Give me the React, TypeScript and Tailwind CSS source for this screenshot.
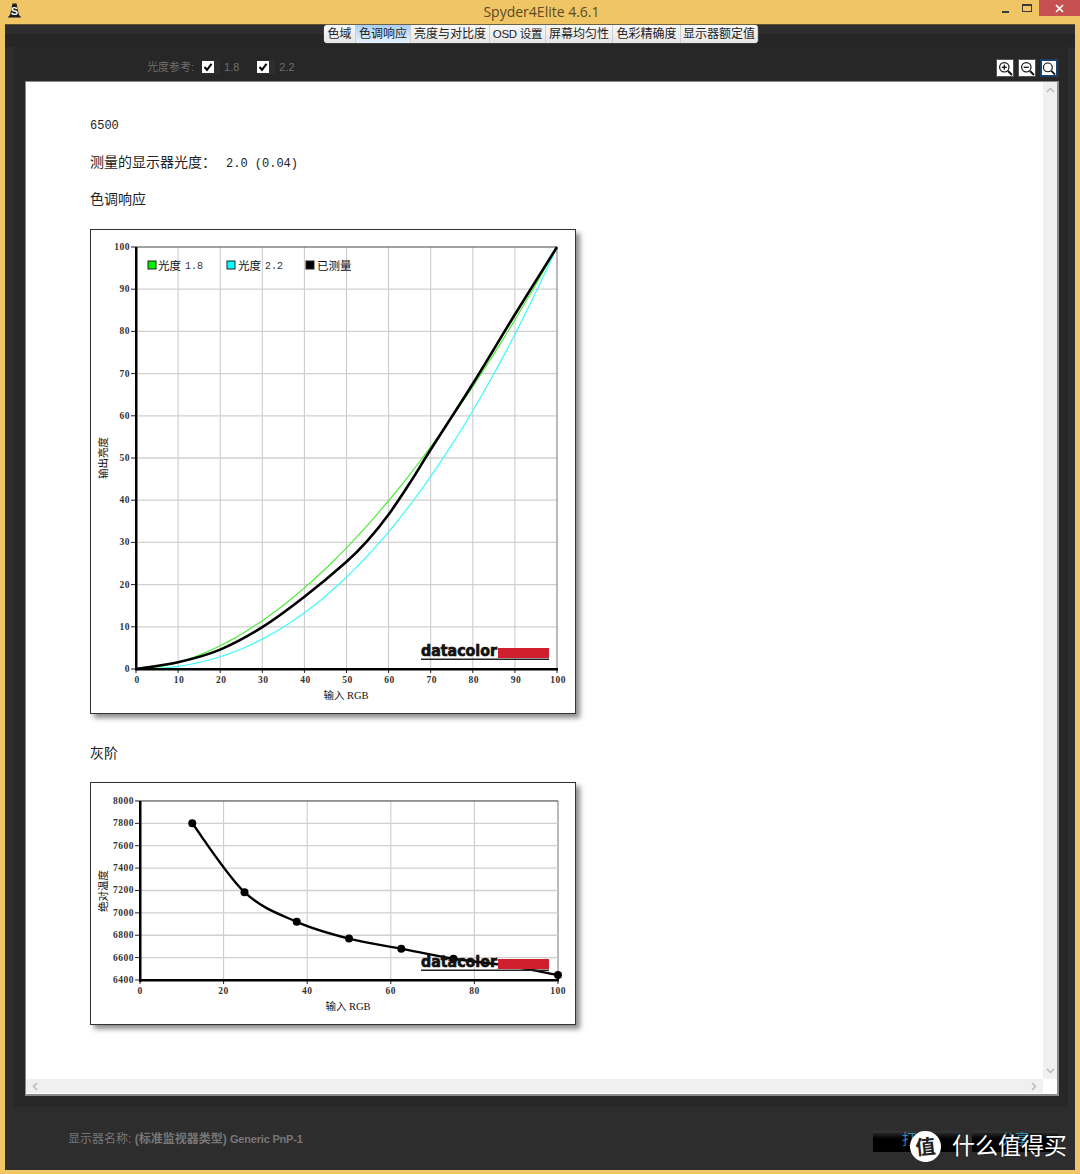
import React from "react";

const CJK = "font-['Liberation_Sans','Noto_Sans_CJK_SC',sans-serif]";
const CHART_NUM = "font-['Liberation_Serif',serif] text-[9.5px] font-bold tracking-[0.5px] fill-[#333]";
const CHART_LABEL = "font-['Liberation_Serif','Noto_Sans_CJK_SC',serif] text-[10.5px] fill-[#111]";
const LEGEND_CJK = "font-['Noto_Sans_CJK_SC',sans-serif] text-[11.5px] fill-[#111]";
const LEGEND_NUM = "font-['Liberation_Mono',monospace] text-[10px] fill-[#333]";

const TABS = [
  { label: "色域", w: "w-[32px]" },
  { label: "色调响应", w: "w-[55px]", active: true },
  { label: "亮度与对比度", w: "w-[79px]" },
  { label: "OSD 设置", w: "w-[56px] text-[11.5px] tracking-[-0.3px]" },
  { label: "屏幕均匀性", w: "w-[67px]" },
  { label: "色彩精确度", w: "w-[68px]" },
  { label: "显示器额定值", w: "w-[77px]" },
];

type Pt = [number, number];

// catmull-rom through the samples, good enough for the smooth chart lines
function smoothPath(pts: Pt[]) {
  let d = `M${pts[0][0]} ${pts[0][1]}`;
  for (let i = 0; i < pts.length - 1; i++) {
    const p0 = pts[Math.max(i - 1, 0)];
    const p1 = pts[i];
    const p2 = pts[i + 1];
    const p3 = pts[Math.min(i + 2, pts.length - 1)];
    const c1x = p1[0] + (p2[0] - p0[0]) / 6;
    const c1y = p1[1] + (p2[1] - p0[1]) / 6;
    const c2x = p2[0] - (p3[0] - p1[0]) / 6;
    const c2y = p2[1] - (p3[1] - p1[1]) / 6;
    d += ` C${c1x} ${c1y} ${c2x} ${c2y} ${p2[0]} ${p2[1]}`;
  }
  return d;
}

function Logo({ y }: { y: number }) {
  return (
    <g>
      <text
        x={421}
        y={y + 12}
        textLength={76}
        lengthAdjust="spacingAndGlyphs"
        stroke="#111"
        strokeWidth={0.7}
        className="font-['DejaVu_Sans',sans-serif] text-[15px] font-bold fill-[#111]"
      >
        datacolor
      </text>
      <rect x={498} y={y + 4} width={51} height={10} fill="#d01f2e" />
      <rect x={421} y={y + 14.5} width={128} height={1.5} fill="#222" />
    </g>
  );
}

function GammaChart() {
  const px = (v: number) => 136 + v * 4.21;
  const py = (v: number) => 669 - v * 4.22;
  const ticks = [0, 10, 20, 30, 40, 50, 60, 70, 80, 90, 100];
  const gamma = (g: number) => {
    const out: string[] = [];
    for (let x = 0; x <= 100; x += 2) {
      out.push(`${px(x)},${py(100 * Math.pow(x / 100, g))}`);
    }
    return out.join(" ");
  };
  const measured: Pt[] = [
    [0, 0], [10, 1.6], [20, 4.6], [30, 9.9], [40, 17.1], [50, 25.4], [55, 30.4], [60, 36.6],
    [65, 44], [70, 52], [80, 67.6], [90, 84], [100, 100],
  ].map(([x, y]) => [px(x), py(y)]);

  return (
    <div className="w-[486px] h-[485px] border border-[#333] bg-white shadow-[4px_4px_5px_rgba(0,0,0,0.45)]">
      <svg width={484} height={483} viewBox="91 230 484 483" className="block">
        {ticks.map((t) => (
          <g key={t}>
            <line x1={px(t)} x2={px(t)} y1={247} y2={669} stroke={t === 100 ? "#777" : "#c8c8c8"} />
            <line x1={136} x2={557} y1={py(t)} y2={py(t)} stroke={t === 100 ? "#444" : "#d0d0d0"} strokeWidth={t === 100 ? 1 : 1.3} />
            <line x1={131} x2={136} y1={py(t)} y2={py(t)} stroke="#222" />
            <line x1={px(t)} x2={px(t)} y1={669} y2={673} stroke="#222" />
            <text x={130} y={py(t) + 3} textAnchor="end" className={CHART_NUM}>{t}</text>
            <text x={px(t) + 1} y={683} textAnchor="middle" className={CHART_NUM}>{t}</text>
          </g>
        ))}
        <polyline points={gamma(1.8)} fill="none" stroke="#4fec3a" strokeWidth={1.2} />
        <polyline points={gamma(2.2)} fill="none" stroke="#3dfafa" strokeWidth={1.2} />
        <path d={smoothPath(measured)} fill="none" stroke="#000" strokeWidth={2.6} />
        <Logo y={644} />
        <rect x={135} y={247} width={2.5} height={423} fill="#000" />
        <rect x={135} y={668} width={423} height={2.5} fill="#000" />

        <rect x={148} y={261} width={8} height={8} fill="#00f000" stroke="#222" />
        <text x={158} y={270} className={LEGEND_CJK}>光度</text>
        <text x={185} y={269} className={LEGEND_NUM}>1.8</text>
        <rect x={227} y={261} width={8} height={8} fill="#00ffff" stroke="#222" />
        <text x={238} y={270} className={LEGEND_CJK}>光度</text>
        <text x={265} y={269} className={LEGEND_NUM}>2.2</text>
        <rect x={306} y={261} width={8} height={8} fill="#000" stroke="#222" />
        <text x={317} y={270} className={LEGEND_CJK}>已测量</text>

        <text x={346} y={699} textAnchor="middle" className={CHART_LABEL}>输入 RGB</text>
        <text transform="translate(107 458) rotate(-90)" textAnchor="middle" className={CHART_LABEL}>输出亮度</text>
      </svg>
    </div>
  );
}

function GrayChart() {
  const px = (v: number) => 140 + v * 4.18;
  const py = (v: number) => 980 - (v - 6400) * 0.1119;
  const yTicks = [6400, 6600, 6800, 7000, 7200, 7400, 7600, 7800, 8000];
  const xTicks = [0, 20, 40, 60, 80, 100];
  const samples: Pt[] = [
    [12.5, 7800], [25, 7185], [37.5, 6920], [50, 6770], [62.5, 6680], [75, 6590], [87.5, 6530], [100, 6445],
  ].map(([x, y]) => [px(x), py(y)]);

  return (
    <div className="w-[486px] h-[243px] border border-[#333] bg-white shadow-[4px_4px_5px_rgba(0,0,0,0.45)]">
      <svg width={484} height={241} viewBox="91 783 484 241" className="block">
        {xTicks.map((t) => (
          <g key={t}>
            <line x1={px(t)} x2={px(t)} y1={801} y2={980} stroke={t === 100 ? "#777" : "#c8c8c8"} />
            <line x1={px(t)} x2={px(t)} y1={980} y2={984} stroke="#222" />
            <text x={px(t)} y={994} textAnchor="middle" className={CHART_NUM}>{t}</text>
          </g>
        ))}
        {yTicks.map((t) => (
          <g key={t}>
            <line x1={140} x2={558} y1={py(t)} y2={py(t)} stroke={t === 8000 ? "#333" : "#d0d0d0"} strokeWidth={t === 8000 ? 1 : 1.3} />
            <line x1={135} x2={140} y1={py(t)} y2={py(t)} stroke="#222" />
            <text x={134} y={py(t) + 3} textAnchor="end" className={CHART_NUM}>{t}</text>
          </g>
        ))}
        <path d={smoothPath(samples)} fill="none" stroke="#000" strokeWidth={2.4} />
        {samples.filter((_, i) => i !== 6).map(([x, y]) => (
          <circle key={x} cx={x} cy={y} r={4} fill="#000" />
        ))}
        <Logo y={955} />
        <rect x={139} y={801} width={2.5} height={181} fill="#000" />
        <rect x={139} y={979} width={420} height={2.5} fill="#000" />
        <text x={348} y={1010} textAnchor="middle" className={CHART_LABEL}>输入 RGB</text>
        <text transform="translate(107 891) rotate(-90)" textAnchor="middle" className={CHART_LABEL}>绝对温度</text>
      </svg>
    </div>
  );
}

function RefCheck({ label }: { label: string }) {
  return (
    <div className="flex items-center">
      <div className="w-[18px] h-[14px] bg-[#2e2e2e] flex items-center">
        <span className="w-[12px] h-[12px] bg-white flex items-center justify-center">
          <svg width={10} height={10} viewBox="0 0 10 10">
            <path d="M1.5 5 L4 7.8 L8.5 1.8" fill="none" stroke="#000" strokeWidth={2} />
          </svg>
        </span>
      </div>
      <span className="ml-[4px] text-[11px] text-[#6e6e6e]">{label}</span>
    </div>
  );
}

function ZoomBtn({ kind }: { kind: "in" | "out" | "fit" }) {
  const active = kind === "fit";
  return (
    <div className={`w-[18px] h-[18px] bg-white flex items-center justify-center border ${active ? "border-[#17406e] border-2" : "border-[#555]"}`}>
      <svg width={15} height={15} viewBox="0 0 15 15">
        <circle cx={6.3} cy={6.3} r={4.7} fill="none" stroke="#111" strokeWidth={1.2} />
        <path d="M10 10 L14 14" stroke="#111" strokeWidth={2} />
        {kind !== "fit" && <path d="M3.8 6.3 H8.8" stroke="#111" strokeWidth={1.3} />}
        {kind === "in" && <path d="M6.3 3.8 V8.8" stroke="#111" strokeWidth={1.3} />}
      </svg>
    </div>
  );
}

function FooterButton({ label }: { label: string }) {
  return (
    <div className="w-[86px] h-[21px] rounded-[1px] bg-gradient-to-b from-[#3a3a3a] via-[#000] to-[#000] flex justify-center text-[14px] leading-[17px] text-[#2f8fc0]">
      {label}
    </div>
  );
}

export default function App() {
  return (
    <div className={`relative w-[1080px] h-[1174px] overflow-hidden bg-[#efc566] ${CJK}`}>
      {/* title bar */}
      <div className="relative h-[24px] flex items-center justify-center">
        <span className="font-['Open_Sans',sans-serif] text-[14px] text-[#5d4a22] ml-[3px] -mt-[1px]">
          Spyder4Elite 4.6.1
        </span>
        <svg width={15} height={15} viewBox="0 0 15 15" className="absolute left-[7px] top-[3px]">
          <path d="M5.5 0.5 H9.5 L12 12 L14.5 14.5 H0.5 L3 12 Z" fill="#1d1d1d" />
          <text x={7.5} y={11.5} textAnchor="middle" className="font-['Liberation_Sans',sans-serif] text-[11px] font-bold fill-[#f4f4f4]">S</text>
        </svg>
        <div className="absolute right-0 top-0 h-[16px] flex">
          <div className="w-[20px] flex items-center justify-start pt-[3px]">
            <span className="w-[7px] h-[2px] bg-[#3a3a3a] mt-[4px]" />
          </div>
          <div className="w-[17px] flex justify-start pt-[4px]">
            <span className="w-[10px] h-[8px] border border-[#3a3a3a] border-t-2" />
          </div>
          <div className="w-[41px] bg-[#c75050] flex items-center justify-center">
            <svg width={9} height={9} viewBox="0 0 9 9">
              <path d="M1 1 L8 8 M8 1 L1 8" stroke="#fff" strokeWidth={1.7} />
            </svg>
          </div>
        </div>
      </div>

      {/* dark window body */}
      <div className="relative mx-[5px] h-[1146px] bg-[#2d2d2d] border-t border-[#5f5230] flex flex-col">
        <div className="absolute left-[319px] top-0 z-10 flex h-[18px] rounded-[4px] overflow-hidden bg-[#eee] text-[12px] leading-[18px] text-[#222] shadow-[0_0_1px_#fff]">
          {TABS.map((t) => (
            <div
              key={t.label}
              className={`${t.w} text-center whitespace-nowrap border-r border-[#cfcfcf] ${
                t.active ? "bg-gradient-to-b from-[#a8d0f8] to-[#e8f2fc]" : "bg-gradient-to-b from-[#f8f8f8] to-[#e6e6e6]"
              }`}
            >
              {t.label}
            </div>
          ))}
        </div>

        <div className="h-[9px] bg-[#2e2e2e]" />
        <div className="h-[13px] bg-[#262626]" />

        <div className="ml-[9px] mr-[7px] h-[1060px] bg-[#272727] flex flex-col">
          {/* toolbar */}
          <div className="h-[34px] flex items-center pt-[6px]">
            <span className="ml-[133px] text-[11px] text-[#6e6e6e]">光度参考:</span>
            <div className="ml-[8px]"><RefCheck label="1.8" /></div>
            <div className="ml-[18px]"><RefCheck label="2.2" /></div>
            <div className="ml-auto mr-[10px] mt-[2px] flex gap-[4px]">
              <ZoomBtn kind="in" />
              <ZoomBtn kind="out" />
              <ZoomBtn kind="fit" />
            </div>
          </div>

          {/* report panel */}
          <div className="ml-[11px] mr-[9px] h-[1015px] border border-[#8a8a8a] border-b-2 border-r-2 bg-white flex flex-col">
            <div className="flex h-[997px]">
              <div className="flex-1 pl-[64px] pt-[34px] text-[14px] leading-[20px] text-[#222] overflow-hidden">
                <p className="h-[20px] font-['Liberation_Mono','Noto_Sans_CJK_SC',monospace] text-[12px]">6500</p>
                <p className="h-[20px] mt-[16px] flex items-baseline">
                  <span>测量的显示器光度：</span>
                  <span className="font-['Liberation_Mono',monospace] text-[12px] ml-[10px]">2.0 (0.04)</span>
                </p>
                <p className="h-[20px] mt-[17px]">色调响应</p>
                <div className="mt-[20px]"><GammaChart /></div>
                <p className="h-[20px] mt-[29px]">灰阶</p>
                <div className="mt-[19px]"><GrayChart /></div>
              </div>
              <div className="w-[14px] bg-[#f0f0f0] flex flex-col items-center justify-between py-[5px]">
                <svg width={9} height={6} viewBox="0 0 9 6"><path d="M1 5 L4.5 1.5 L8 5" fill="none" stroke="#b8b8b8" strokeWidth={1.5} /></svg>
                <svg width={9} height={6} viewBox="0 0 9 6"><path d="M1 1 L4.5 4.5 L8 1" fill="none" stroke="#b8b8b8" strokeWidth={1.5} /></svg>
              </div>
            </div>
            <div className="flex h-[14px]">
              <div className="flex-1 bg-[#f0f0f0] flex items-center justify-between px-[6px]">
                <svg width={6} height={9} viewBox="0 0 6 9"><path d="M5 1 L1.5 4.5 L5 8" fill="none" stroke="#b8b8b8" strokeWidth={1.5} /></svg>
                <svg width={6} height={9} viewBox="0 0 6 9"><path d="M1 1 L4.5 4.5 L1 8" fill="none" stroke="#b8b8b8" strokeWidth={1.5} /></svg>
              </div>
              <div className="w-[14px] bg-white" />
            </div>
          </div>
        </div>

        {/* footer */}
        <div className="flex-1 relative flex items-start pt-[24px] pl-[63px] pr-[17px]">
          <span className="text-[12px] leading-[16px] text-[#777]">
            显示器名称: <span className="font-bold">(标准监视器类型)</span>{" "}
            <span className="font-bold text-[11px] tracking-[-0.2px]">Generic PnP-1</span>
          </span>
          <div className="ml-auto flex gap-[13px]">
            <FooterButton label="打印" />
            <FooterButton label="分享" />
          </div>
        </div>
      </div>

      {/* site badge over the lower right corner */}
      <div className="absolute left-[910px] top-[1131px] flex items-center">
        <div className="w-[31px] h-[31px] rounded-full bg-white flex items-center justify-center text-[20px] leading-none text-[#222] font-bold -rotate-6">
          值
        </div>
        <span className="ml-[11px] text-[23px] leading-[31px] text-white whitespace-nowrap [text-shadow:0_0_2px_rgba(0,0,0,0.5)]">
          什么值得买
        </span>
      </div>
    </div>
  );
}
